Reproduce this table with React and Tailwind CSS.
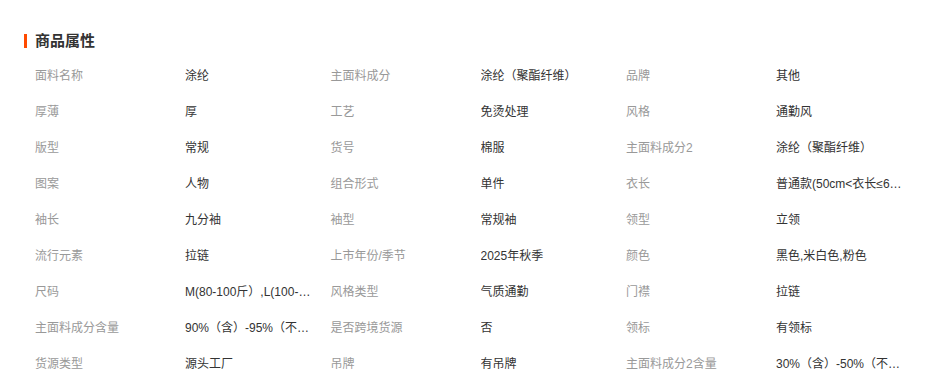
import React from 'react';

const rows = [
  [['面料名称', '涂纶'], ['主面料成分', '涂纶（聚酯纤维）'], ['品牌', '其他']],
  [['厚薄', '厚'], ['工艺', '免烫处理'], ['风格', '通勤风']],
  [['版型', '常规'], ['货号', '棉服'], ['主面料成分2', '涂纶（聚酯纤维）']],
  [['图案', '人物'], ['组合形式', '单件'], ['衣长', '普通款(50cm<衣长≤65cm)']],
  [['袖长', '九分袖'], ['袖型', '常规袖'], ['领型', '立领']],
  [['流行元素', '拉链'], ['上市年份/季节', '2025年秋季'], ['颜色', '黑色,米白色,粉色']],
  [['尺码', 'M(80-100斤）,L(100-120斤）'], ['风格类型', '气质通勤'], ['门襟', '拉链']],
  [['主面料成分含量', '90%（含）-95%（不含）'], ['是否跨境货源', '否'], ['领标', '有领标']],
  [['货源类型', '源头工厂'], ['吊牌', '有吊牌'], ['主面料成分2含量', '30%（含）-50%（不含）']],
];

function App() {
  return (
    <div className="w-[935px] h-[381px] bg-white pt-[32px] pl-[24px] font-['Liberation_Sans','Noto_Sans_CJK_SC',sans-serif]">
      <div className="flex items-center h-[17px]">
        <div className="w-[3px] h-[14px] bg-[#ff4a00]" />
        <h2 className="ml-[8px] text-[15px] leading-[17px] font-bold text-[#333]">商品属性</h2>
      </div>
      <div className="mt-[9px] pl-[11px]">
        {rows.map((row, i) => (
          <div key={i} className="flex h-[36px] items-center text-[12px]">
            {row.map(([label, value], j) => (
              <div key={j} className="flex w-[295.5px] shrink-0">
                <div className="w-[150px] shrink-0 text-[#999]">{label}</div>
                <div className="w-[127px] truncate text-[#333]">{value}</div>
              </div>
            ))}
          </div>
        ))}
      </div>
    </div>
  );
}

export default App;
